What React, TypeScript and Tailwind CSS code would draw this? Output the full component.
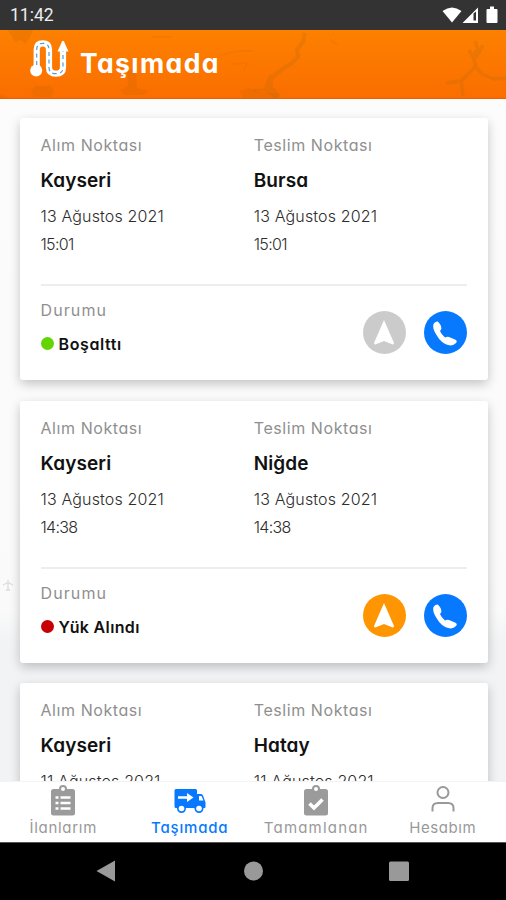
import React from "react";

type Stop = { city: string; date: string; time: string };
type Shipment = {
  from: Stop;
  to: Stop;
  status: string;
  statusStyle: string;
  dot: string;
  nav: string;
};

const shipments: Shipment[] = [
  {
    from: { city: "Kayseri", date: "13 Ağustos 2021", time: "15:01" },
    to: { city: "Bursa", date: "13 Ağustos 2021", time: "15:01" },
    status: "Boşalttı",
    statusStyle: "tracking-[0.6px]",
    dot: "bg-[#63d500]",
    nav: "text-[#cbcbcb]",
  },
  {
    from: { city: "Kayseri", date: "13 Ağustos 2021", time: "14:38" },
    to: { city: "Niğde", date: "13 Ağustos 2021", time: "14:38" },
    status: "Yük Alındı",
    statusStyle: "tracking-[0.35px]",
    dot: "bg-[#c60006]",
    nav: "text-[#ff9500]",
  },
  {
    from: { city: "Kayseri", date: "11 Ağustos 2021", time: "10:20" },
    to: { city: "Hatay", date: "11 Ağustos 2021", time: "10:20" },
    status: "Yük Alındı",
    statusStyle: "tracking-[0.35px]",
    dot: "bg-[#c60006]",
    nav: "text-[#ff9500]",
  },
];

function StatusBar() {
  return (
    <div className="flex h-[30px] shrink-0 items-center justify-between bg-[#333] pr-[8px] pl-[10px]">
      <span className="pt-[2px] font-[Roboto] text-[17.5px] leading-none text-[#eee]">11:42</span>
      <svg width="56" height="20" viewBox="0 0 56 20" fill="#fff">
        <path d="M0.5 6 Q10 -1 19.500 6 L10 17.500Z" />
        <path fillRule="evenodd" d="M20.500 18 L36 2.500 V18Z M31.500 8.500 V15.500 H34 V6.500Z" />
        <path d="M45.500 4 H48 V1.500 H52 V4 H54.500 Q55.500 4 55.500 5 V17 Q55.500 18 54.500 18 H45.500 Q44.500 18 44.500 17 V5 Q44.500 4 45.500 4Z" />
      </svg>
    </div>
  );
}

function Header() {
  return (
    <header className="relative h-[69px] shrink-0 border-b border-[#f25c00] bg-linear-to-b from-[#fd8000] to-[#fa6e00]">
      <svg className="absolute inset-0" width="506" height="68" viewBox="0 0 506 68" fill="none">
        <g stroke="#b86a10" strokeLinejoin="round" opacity="0.24">
          <path d="M305 3 L303 12 L297 20 L298 27 L291 34 L284 38 L277 43 L271 49 L271 57 L279 66" strokeWidth="4" />
          <path d="M272 45 L267 59 L278 67" strokeWidth="6" />
          <path d="M253 60 H268" strokeWidth="3" />
          <path d="M475 11 L478 19 L473 26 L476 36 L468 44 L461 51 L446 53 M483 15 L476 28 M469 20 L474 29 M474 35 L482 44 L494 49 L506 48 M461 50 L463 66" strokeWidth="3.500" />
        </g>
        <g fill="#c56200" opacity="0.22">
          <path d="M8 0 H33 L29 9 L25 14 L21 10 L15 12Z M31 60 L36 56 H50 L54 60 L51 67 H34Z M0 64 L9 68 H0Z" />
          <path d="M127 40 H136 L137 58 L149 61 L143 65 H125 L120 61 L128 56Z M240 61 L249 58 L260 62 L278 64 L281 68 H243Z" />
        </g>
        <path d="M152 7 H172 M220 25 L238 21 H253 M232 34 L247 33 L244 41 M330 9 L337 15" stroke="#db6900" strokeWidth="2" opacity="0.2" />
      </svg>
      <div className="relative flex h-[64px] items-center pl-[30px]">
        <svg className="mb-[6px]" width="39" height="38" viewBox="0 0 39 38" fill="none">
          <path d="M6.700 30 V9.500 Q6.700 3.300 12.800 3.300 Q19 3.300 19 9.500 V27.500 Q19 33.700 26 33.700 Q33 33.700 33 27.500 V11" stroke="#fff" strokeWidth="6.200" />
          <circle cx="6.200" cy="30.500" r="6" fill="#fff" />
          <path d="M27.500 11.500 L32 1.500 Q33 0 34 1.500 L38.500 11.500Z" fill="#fff" />
          <path d="M6.700 25 V9.500 Q6.700 3.300 12.800 3.300 Q19 3.300 19 9.500 V27.500 Q19 33.700 26 33.700 Q33 33.700 33 27.500 V11" stroke="#4aa0df" strokeWidth="1.200" strokeDasharray="4 3.500" />
        </svg>
        <h1 className="mt-[3px] ml-[11px] text-[26.5px] leading-none font-bold tracking-[1.4px] whitespace-nowrap text-white">Taşımada</h1>
      </div>
    </header>
  );
}

function StopColumn({ label, stop }: { label: string; stop: Stop }) {
  return (
    <div className="flex flex-1 flex-col whitespace-nowrap text-[#2d2d2d]">
      <span className="h-[28px] text-[16px] leading-[28px] tracking-[0.57px] text-[#8f8f8f]">{label}</span>
      <span className="h-[43px] text-[19px] leading-[44px] font-semibold tracking-[0.1px] text-[#111]">{stop.city}</span>
      <span className="h-[28px] text-[16px] leading-[28px] font-light tracking-[0.15px]">{stop.date}</span>
      <span className="h-[28px] text-[16px] leading-[28px] font-light tracking-[-0.7px]">{stop.time}</span>
    </div>
  );
}

function ShipmentCard({ item }: { item: Shipment }) {
  return (
    <article className="relative h-[262px] shrink-0 rounded-[3px] bg-white pr-[21px] pl-[20.5px] pt-[13px] shadow-[0_4px_11px_rgba(0,0,0,0.22)]">
      <div className="flex">
        <StopColumn label="Alım Noktası" stop={item.from} />
        <StopColumn label="Teslim Noktası" stop={item.to} />
      </div>
      <div className="mt-[26px] h-[2px] bg-[#ededed]" />
      <div className="flex items-start justify-between">
        <div className="flex flex-col whitespace-nowrap">
          <span className="mt-[10px] h-[28px] text-[16px] leading-[28px] tracking-[1.1px] text-[#8f8f8f]">Durumu</span>
          <span className="mt-[6px] flex h-[28px] items-center gap-[5px]">
            <i className={`mb-[1px] size-[13px] rounded-full ${item.dot}`} />
            <b className={`text-[16px] leading-[28px] font-semibold text-[#111] ${item.statusStyle}`}>{item.status}</b>
          </span>
        </div>
        <div className="mt-[25px] mr-[0.5px] flex gap-[18px]">
          <svg className={item.nav} width="43" height="43" viewBox="0 0 43 43">
            <circle cx="21.500" cy="21.500" r="21.500" fill="currentColor" />
            <path d="M21 9 L31 32 Q31 34 29 33.300 L21 30 L13 33.300 Q11 34 11 32Z" fill="#fff" />
          </svg>
          <svg width="43" height="43" viewBox="0 0 43 43">
            <circle cx="21.500" cy="21.500" r="21.500" fill="#0779ff" />
            <path d="M9.500 13 Q11 10.200 13.500 10.500 Q15 11 17 15 Q18.200 17.500 16 20 Q17 23 21 26.500 Q23 25.500 25 26 L31 28.500 Q34 30 32 32 Q29 35.500 24 34 Q17 32 12.500 24 Q8 17 9.500 13Z" fill="#fff" />
          </svg>
        </div>
      </div>
    </article>
  );
}

function ClipboardIcon({ checked }: { checked?: boolean }) {
  return (
    <svg width="24" height="31" viewBox="0 0 24 31" fill="none">
      <path d="M2.500 4 H21.500 Q24 4 24 6.500 V28 Q24 30.500 21.500 30.500 H2.500 Q0 30.500 0 28 V6.500 Q0 4 2.500 4Z" fill="#9b9b9b" />
      <circle cx="12" cy="4" r="3" fill="#fff" stroke="#9b9b9b" strokeWidth="2" />
      {checked ? (
        <path d="M5.500 18.500 L10 23 L18.500 14.500" stroke="#fff" strokeWidth="3.600" />
      ) : (
        <path d="M4.500 12.500 H7.500 M9.500 12.500 H19.500 M4.500 18 H7.500 M9.500 18 H19.500 M4.500 23.500 H7.500 M9.500 23.500 H19.500" stroke="#fff" strokeWidth="2.300" />
      )}
    </svg>
  );
}

function TruckIcon() {
  return (
    <svg width="32" height="25" viewBox="0 0 32 25" fill="none">
      <path d="M2 1 H21.500 Q23 1 23 2.500 V6 H27 Q28.500 6 29 7.500 L31 13 Q31.500 14 31.500 15 V19 Q31.500 20 30.500 20 H2 Q0.500 20 0.500 18.500 V2.500 Q0.500 1 2 1Z" fill="#0779ff" />
      <path d="M25 8 H27.500 L29.500 12.500 H25Z" fill="#fff" />
      <path d="M4 9.500 H14" stroke="#fff" strokeWidth="2.500" />
      <path d="M13 5 L19.500 9.500 L13 14Z" fill="#fff" />
      <circle cx="7.500" cy="20.500" r="4.500" fill="#0779ff" />
      <circle cx="7.500" cy="20.500" r="2.800" fill="#fff" />
      <circle cx="25" cy="20.500" r="4.500" fill="#0779ff" />
      <circle cx="25" cy="20.500" r="2.800" fill="#fff" />
    </svg>
  );
}

function UserIcon() {
  return (
    <svg className="mb-[3px]" width="24" height="26" viewBox="0 0 24 26" fill="none" stroke="#999" strokeWidth="2">
      <circle cx="12" cy="6.500" r="5.500" />
      <path d="M1.500 25.500 V22 Q1.500 17 7 17 H17 Q22.500 17 22.500 22 V25.500" />
    </svg>
  );
}

function Tab({ icon, label, style }: { icon: React.ReactNode; label: string; style: string }) {
  return (
    <div className="flex flex-1 flex-col items-center">
      <div className="flex h-[34px] items-center justify-center">{icon}</div>
      <span className={`text-[15px] leading-[22px] whitespace-nowrap ${style}`}>{label}</span>
    </div>
  );
}

export default function App() {
  return (
    <div className="flex h-[900px] w-[506px] flex-col overflow-hidden bg-[#fbfbfb] font-['Inter','Noto_Sans',sans-serif] [font-feature-settings:'cv11','ss03']">
      <StatusBar />
      <Header />
      <main className="relative flex min-h-0 flex-1 flex-col gap-[20.7px] overflow-hidden bg-linear-to-b from-[#fcfcfc] via-[#fafafa] via-75% to-[#f1f3f4] to-80% pt-[19px] pr-[18px] pl-[20px]">
        <svg className="absolute top-[480px] left-[2px]" width="12" height="12" viewBox="0 0 12 12" fill="none" stroke="#dcdcdc" strokeWidth="1.300">
          <path d="M6 1 V11 M1 6 L6 3.500 L11 6 M4 11 H8" />
        </svg>
        <ShipmentCard item={shipments[0]} />
        <ShipmentCard item={shipments[1]} />
        <ShipmentCard item={shipments[2]} />
      </main>
      <nav className="z-10 flex h-[61px] shrink-0 border-t border-[#f3f3f3] bg-white pt-[1px]">
        <Tab icon={<ClipboardIcon />} label="İlanlarım" style="text-[#999] tracking-[0.7px]" />
        <Tab icon={<TruckIcon />} label="Taşımada" style="font-medium text-[#0779ff] tracking-[0.8px]" />
        <Tab icon={<ClipboardIcon checked />} label="Tamamlanan" style="text-[#999] tracking-[1.2px]" />
        <Tab icon={<UserIcon />} label="Hesabım" style="text-[#999] tracking-[0.6px]" />
      </nav>
      <div className="flex h-[58px] shrink-0 items-center justify-center border-t border-[#555] bg-black">
        <svg width="506" height="57" viewBox="0 0 506 57" fill="#999">
          <path d="M96.500 28 L115 17.500 V38.500Z" />
          <circle cx="253.500" cy="28" r="9.500" />
          <rect x="389" y="18.500" width="20" height="19.500" rx="1.500" />
        </svg>
      </div>
    </div>
  );
}
